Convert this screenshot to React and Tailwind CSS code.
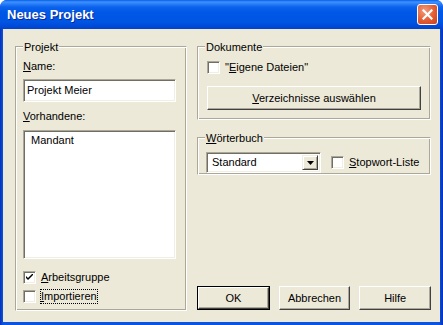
import React from "react";

const font = { fontFamily: '"Liberation Sans", Arial, sans-serif' };

function GroupBox({ title, className, children }) {
  return (
    <div
      className={
        "relative border border-t-[#aca899] border-l-[#aca899] border-r-white border-b-white shadow-[inset_1px_1px_0_#ffffff,inset_-1px_-1px_0_#aca899] " +
        className
      }
    >
      <span className="absolute left-[7px] top-[-6px] bg-[#ece9d8] px-[1px] leading-[13px]">{title}</span>
      {children}
    </div>
  );
}

function CheckBox({ checked }) {
  return (
    <div className="w-[13px] h-[13px] shrink-0 bg-white border border-t-[#aca899] border-l-[#aca899] border-r-white border-b-white shadow-[inset_1px_1px_0_#716f64,inset_-1px_-1px_0_#f1efe2] flex items-center justify-center">
      {checked && (
        <svg width="7" height="7" viewBox="0 0 7 7">
          <path d="M0 2 L0 4 L2 6 L7 1 L7 -1 L2 4 Z" fill="#000" />
        </svg>
      )}
    </div>
  );
}

function Button({ children, isDefault, className = "" }) {
  const inner = (
    <div className="h-full w-full flex items-center justify-center bg-[#ece9d8] border border-t-white border-l-white border-r-[#404040] border-b-[#404040] shadow-[inset_-1px_-1px_0_#aca899]">
      {children}
    </div>
  );
  if (isDefault) {
    return <div className={"h-[24px] border border-black " + className}>{inner}</div>;
  }
  return <div className={"h-[24px] " + className}>{inner}</div>;
}

export default function App() {
  return (
    <div className="w-[443px] h-[325px] bg-white text-[11px] leading-[13px] text-black" style={font}>
      <div className="w-full h-full flex flex-col rounded-t-[7px] overflow-hidden bg-[linear-gradient(to_right,#0831b8,#0a54e0_3px,#0a54e0_439px,#0831b8)]">
        {/* title bar */}
        <div className="h-[29px] shrink-0 flex items-center pl-[7px] pr-[5px] bg-[linear-gradient(to_bottom,#0a5ce6_0px,#3d93ff_2px,#2a7df8_4px,#0b62ec_7px,#0058e6_12px,#0055e2_22px,#004ad8_26px,#0043cc_29px)]">
          <span
            className="flex-1 text-white font-bold text-[13px] leading-[16px] pt-[1px] [text-shadow:1px_1px_0_#0a2a9c]"
            style={font}
          >
            Neues Projekt
          </span>
          <div className="w-[21px] h-[21px] rounded-[3px] border border-white bg-[radial-gradient(circle_at_35%_30%,#f29b7d,#e35c33_55%,#c6401e)] flex items-center justify-center">
            <svg width="11" height="11" viewBox="0 0 11 11">
              <path d="M1.5 1.5 L9.5 9.5 M9.5 1.5 L1.5 9.5" stroke="#fff" strokeWidth="2.2" strokeLinecap="square" />
            </svg>
          </div>
        </div>

        {/* body */}
        <div className="flex-1 mx-[3px] mb-[3px] bg-[#ece9d8] flex pt-[17px] pl-[12px] pb-[11px] gap-[10px]">
          <GroupBox title="Projekt" className="w-[172px] h-[265px]">
            <div className="flex flex-col pl-[7px] pt-[13px]">
              <span>
                <u>N</u>ame:
              </span>
              <div className="mt-[6px] w-[153px] h-[23px] bg-white border border-t-[#aca899] border-l-[#aca899] border-r-white border-b-white shadow-[inset_1px_1px_0_#716f64,inset_-1px_-1px_0_#f1efe2] flex items-center pl-[3px]">
                Projekt Meier
              </div>
              <span className="mt-[8px]">
                <u>V</u>orhandene:
              </span>
              <div className="mt-[7px] w-[153px] h-[129px] bg-white border border-t-[#aca899] border-l-[#aca899] border-r-white border-b-white shadow-[inset_1px_1px_0_#716f64,inset_-1px_-1px_0_#f1efe2] pt-[3px] pl-[7px]">
                Mandant
              </div>
              <div className="mt-[12px] flex items-center">
                <CheckBox checked />
                <span className="ml-[5px]">
                  <u>A</u>rbeitsgruppe
                </span>
              </div>
              <div className="mt-[5px] flex items-center">
                <CheckBox />
                <span className="ml-[4px] border border-dotted border-black px-0 leading-[13px]">
                  <u>I</u>mportieren
                </span>
              </div>
            </div>
          </GroupBox>

          <div className="w-[234px] flex flex-col">
            <GroupBox title="Dokumente" className="h-[74px]">
              <div className="flex flex-col pl-[9px] pt-[14px]">
                <div className="flex items-center">
                  <CheckBox />
                  <span className="ml-[5px]">
                    "<u>E</u>igene Dateien"
                  </span>
                </div>
                <Button className="mt-[12px] w-[214px]">
                  <span>
                    <u>V</u>erzeichnisse auswählen
                  </span>
                </Button>
              </div>
            </GroupBox>

            <GroupBox
              title={
                <span>
                  <u>W</u>örterbuch
                </span>
              }
              className="h-[38px] mt-[17px]"
            >
              <div className="flex items-center pl-[8px] pt-[14px]">
                <div className="w-[115px] h-[21px] bg-white border border-t-[#aca899] border-l-[#aca899] border-r-white border-b-white shadow-[inset_1px_1px_0_#716f64,inset_-1px_-1px_0_#f1efe2] flex items-center p-[2px]">
                  <span className="flex-1 pl-[3px]">Standard</span>
                  <div className="w-[16px] h-[15px] bg-[#ece9d8] border border-t-[#f1efe2] border-l-[#f1efe2] border-r-[#404040] border-b-[#404040] shadow-[inset_1px_1px_0_#ffffff,inset_-1px_-1px_0_#aca899] flex items-center justify-center">
                    <svg width="7" height="4" viewBox="0 0 7 4">
                      <path d="M0 0 H7 L3.5 4 Z" fill="#000" />
                    </svg>
                  </div>
                </div>
                <div className="ml-[10px] flex items-center">
                  <CheckBox />
                  <span className="ml-[5px]">
                    <u>S</u>topwort-Liste
                  </span>
                </div>
              </div>
            </GroupBox>

            <div className="mt-auto mb-[1px] flex gap-[9px]">
              <Button isDefault className="w-[73px]">
                OK
              </Button>
              <Button className="w-[72px]">Abbrechen</Button>
              <Button className="w-[72px]">Hilfe</Button>
            </div>
          </div>
        </div>
      </div>
    </div>
  );
}
